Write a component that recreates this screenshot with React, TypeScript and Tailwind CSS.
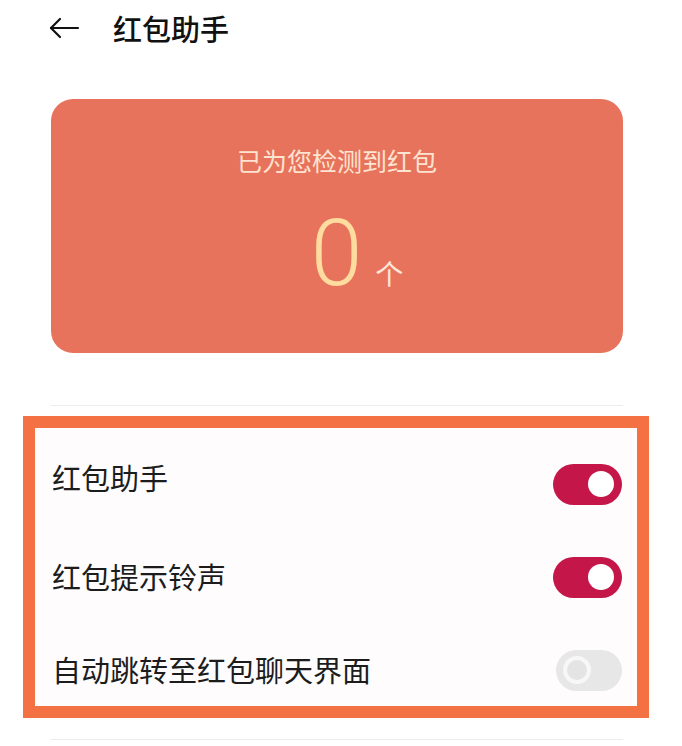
import React from 'react'

const cjk = { fontFamily: '"Noto Sans CJK SC", "Noto Sans", sans-serif' }

function Toggle({ on }: { on: boolean }) {
  if (on) {
    return (
      <div className="flex h-[41px] w-[69px] items-center justify-end rounded-full bg-[#c5164a] pr-[8px]">
        <div className="h-[26px] w-[26px] rounded-full bg-white" />
      </div>
    )
  }
  return (
    <div className="flex h-[41px] w-[66px] items-center justify-start rounded-full bg-[#e7e7e7] pl-[7px]">
      <div className="h-[28px] w-[28px] rounded-full border-[4px] border-[#f7f7f7] bg-[#e4e4e4]" />
    </div>
  )
}

const rows = [
  { label: '红包助手', on: true, text: 'mb-[14px]' },
  { label: '红包提示铃声', on: true, text: 'mb-[2px]' },
  { label: '自动跳转至红包聊天界面', on: false, text: 'mb-[2px]' },
]

export default function App() {
  return (
    <div className="min-h-[746px] w-[682px] bg-white" style={cjk}>
      {/* header */}
      <div className="flex h-[56px] items-center pl-[48px]">
        <svg width="32" height="22" viewBox="0 0 32 22" fill="none" stroke="#111" strokeWidth="2.2" strokeLinecap="round" strokeLinejoin="round">
          <path d="M30 11H3" />
          <path d="M12 2L3 11l9 9" />
        </svg>
        <div className="ml-[33px] text-[29px] font-medium leading-none text-[#111]">红包助手</div>
      </div>

      {/* counter card */}
      <div className="ml-[51px] mt-[43px] h-[254px] w-[572px] rounded-[22px] bg-[#e8735c] pt-[44px]">
        <div className="text-center text-[25px] leading-[34px] text-[#fde4d2]">已为您检测到红包</div>
        <div className="mt-[30px] flex items-baseline justify-center pl-[40px]">
          <span className="text-[93px] font-light leading-none text-[#fedc9f]" style={{ fontFamily: 'Roboto, "Noto Sans", sans-serif' }}>
            0
          </span>
          <span className="ml-[13px] text-[28px] leading-none text-[#fde6d8]">个</span>
        </div>
      </div>

      <div className="ml-[51px] mt-[52px] h-px w-[572px] bg-[#ececec]" />

      {/* settings list */}
      <div className="ml-[23px] mt-[10px] w-[626px] border-[12px] border-[#f47144] bg-[#fefcfc] pl-[17px] pr-[15px] pt-[20px]">
        <div className="flex flex-col gap-[21px]">
          {rows.map((r) => (
            <div key={r.label} className="flex h-[72px] items-center justify-between">
              <span className={`text-[29px] leading-none text-[#1c1c1c] ${r.text}`}>{r.label}</span>
              <Toggle on={r.on} />
            </div>
          ))}
        </div>
      </div>

      <div className="ml-[51px] mt-[21px] h-px w-[572px] bg-[#ececec]" />
    </div>
  )
}
